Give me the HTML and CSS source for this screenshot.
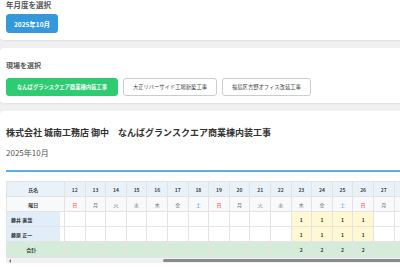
FILE: index.html
```html
<!DOCTYPE html>
<html lang="ja">
<head>
    <meta charset="UTF-8">
    <meta name="viewport" content="width=device-width, initial-scale=1.0">
    <title>勤務表</title>
    <link rel="stylesheet" href="styles.css">
</head>
<body>
    <div class="page">
        <div class="card card-month">
            <div class="field-label">年月度を選択</div>
            <div class="btn-row">
                <button type="button" class="btn btn-month">2025年10月</button>
            </div>
        </div>

        <div class="card">
            <div class="field-label">現場を選択</div>
            <div class="btn-row">
                <button type="button" class="btn btn-site active">なんばグランスクエア商業棟内装工事</button>
                <button type="button" class="btn btn-site">大正リバーサイド工場新築工事</button>
                <button type="button" class="btn btn-site">福島区吉野オフィス改装工事</button>
            </div>
        </div>

        <div class="card card-report">
            <div class="report-head">
                <h1 class="report-title">株式会社 城南工務店 御中　なんばグランスクエア商業棟内装工事</h1>
                <div class="report-month">2025年10月</div>
            </div>

            <div class="table-wrap">
                <table class="schedule">
                    <colgroup>
                        <col class="col-name">
                        <col class="col-cut">
                        <col span="17" class="col-day">
                    </colgroup>
                    <thead>
                        <tr class="row-date">
                            <th class="name">氏名</th><th class="cut"></th>
                            <th>12</th><th>13</th><th>14</th><th>15</th><th>16</th><th>17</th>
                            <th>18</th><th>19</th><th>20</th><th>21</th><th>22</th><th>23</th>
                            <th>24</th><th>25</th><th>26</th><th>27</th><th></th>
                        </tr>
                        <tr class="row-week">
                            <th class="name">曜日</th><th class="cut"></th>
                            <th class="sun">日</th><th>月</th><th>火</th><th>水</th><th>木</th><th>金</th>
                            <th class="sat">土</th><th class="sun">日</th><th>月</th><th>火</th><th>水</th><th>木</th>
                            <th>金</th><th class="sat">土</th><th class="sun">日</th><th>月</th><th></th>
                        </tr>
                    </thead>
                    <tbody>
                        <tr>
                            <td class="name">藤井 直哉</td><td class="cut"></td>
                            <td></td><td></td><td></td><td></td><td></td><td></td>
                            <td></td><td></td><td></td><td></td><td></td>
                            <td class="work">1</td><td class="work">1</td><td class="work">1</td><td class="work">1</td>
                            <td></td><td></td>
                        </tr>
                        <tr>
                            <td class="name">藤原 正一</td><td class="cut"></td>
                            <td></td><td></td><td></td><td></td><td></td><td></td>
                            <td></td><td></td><td></td><td></td><td></td>
                            <td class="work">1</td><td class="work">1</td><td class="work">1</td><td class="work">1</td>
                            <td></td><td></td>
                        </tr>
                    </tbody>
                    <tfoot>
                        <tr class="row-total">
                            <td class="name">合計</td><td class="cut"></td>
                            <td></td><td></td><td></td><td></td><td></td><td></td>
                            <td></td><td></td><td></td><td></td><td></td>
                            <td>2</td><td>2</td><td>2</td><td>2</td>
                            <td></td><td></td>
                        </tr>
                    </tfoot>
                </table>
            </div>

            <div class="hscroll">
                <span class="hscroll-arrow"></span>
                <span class="hscroll-thumb"></span>
            </div>
        </div>
    </div>
</body>
</html>
```

FILE: styles.css
```css
*{
    margin: 0;
    padding: 0;
    box-sizing: border-box;
}

body{
    background-color: #f0f0f0;
    font-family: "Noto Sans CJK JP", "Noto Sans", sans-serif;
    color: #333;
    overflow: hidden;
}

.page{
    width: 440px;
    display: flex;
    flex-direction: column;
    gap: 8px;
    margin-top: -12px;
}

.card{
    background-color: #fff;
    border-radius: 4px;
    padding: 12px 6px 7px;
    box-shadow: 0 1px 2px rgba(0, 0, 0, 0.06);
}

.field-label{
    font-size: 7px;
    line-height: 10px;
    font-weight: bold;
    color: #555;
    margin-bottom: 8px;
}

.card-month .field-label{
    font-size: 7.5px;
    margin-bottom: 4px;
}

.btn-row{
    display: flex;
    gap: 5px;
}

.btn{
    display: flex;
    align-items: center;
    justify-content: center;
    height: 18px;
    padding: 0 9px;
    border-radius: 3px;
    font-family: inherit;
    cursor: pointer;
}

.btn-month{
    width: 52px;
    height: 19px;
    background-color: #3498db;
    border: 1px solid #3498db;
    color: #fff;
    font-size: 6.5px;
    font-weight: bold;
    padding: 0;
}

.btn-site{
    background-color: #fff;
    border: 1px solid #ccc;
    color: #444;
    font-size: 5.3px;
}

.btn-site.active{
    padding: 0 10px;
    background-color: #2ecc71;
    border-color: #2ecc71;
    color: #fff;
    font-weight: bold;
}

.card-report{
    padding-top: 16px;
}

.report-head{
    padding-bottom: 12px;
    border-bottom: 2px solid #5dade2;
}

.report-title{
    font-size: 9px;
    line-height: 12px;
    font-weight: bold;
    color: #333;
    margin-bottom: 8px;
    white-space: nowrap;
}

.report-month{
    font-size: 8px;
    line-height: 11px;
    color: #555;
}

.table-wrap{
    margin-top: 9px;
    overflow: hidden;
}

.schedule{
    width: 408px;
    table-layout: fixed;
    border-collapse: collapse;
    font-size: 5px;
}

.col-name{ width: 53px; }
.col-cut{ width: 5px; }
.col-day{ width: 20.6px; }

.schedule th,
.schedule td{
    height: 15px;
    border: 1px solid #e4e4e4;
    text-align: center;
    font-weight: normal;
    padding: 0;
}

.schedule .name{
    border-right-style: hidden;
}

.schedule .cut{
    border-left-style: hidden;
}

.row-date th{
    background-color: #e9f2f8;
    color: #444;
    font-weight: bold;
}

.row-week th{
    background-color: #f8f9fa;
    color: #777;
}

.row-week .name{
    color: #444;
    font-weight: bold;
}

.row-week .sun{ color: #e74c3c; }
.row-week .sat{ color: #3498db; }

tbody .name{
    background-color: #e1eefa;
    text-align: left;
    padding-left: 4px;
    font-weight: bold;
    color: #333;
}

tbody .work{
    background-color: #fff8d2;
    font-weight: bold;
}

.row-total td{
    height: 16px;
    background-color: #d5ecdb;
    font-weight: bold;
}

.row-total .name{
    padding-right: 4px;
}

.hscroll{
    display: flex;
    align-items: center;
    height: 5px;
    background-color: #f1f1f1;
}

.hscroll-arrow{
    width: 0;
    height: 0;
    margin-left: 3px;
    border-top: 2px solid transparent;
    border-bottom: 2px solid transparent;
    border-right: 2px solid #777;
}

.hscroll-thumb{
    width: 240px;
    height: 3px;
    margin-left: 152px;
    border-radius: 2px;
    background-color: #8a8a8a;
}
```
